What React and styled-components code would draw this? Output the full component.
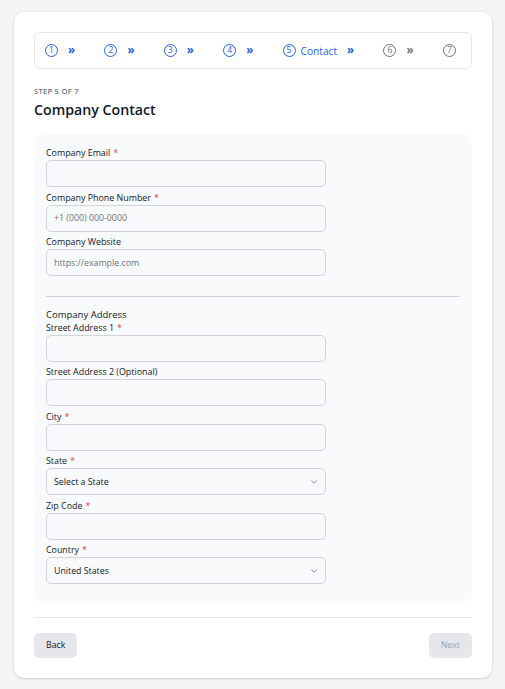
import React from "react";
import styled, { createGlobalStyle } from "styled-components";
import { ChevronDown } from "lucide-react";

const Global = createGlobalStyle`
  * { box-sizing: border-box; }
  html, body { margin: 0; padding: 0; background: #f3f4f6; }
  body { font-family: "Open Sans", "Noto Sans", "Liberation Sans", sans-serif; color: #111827; }
`;

const Page = styled.div`
  padding: 12px 13px 12px 14px;
`;

const Card = styled.div`
  background: #ffffff;
  border-radius: 10px;
  box-shadow: 0 1px 3px rgba(0, 0, 0, 0.12), 0 0 0 1px rgba(0, 0, 0, 0.02);
  padding: 20px 20px 20px;
`;

const Stepper = styled.div`
  display: flex;
  align-items: center;
  height: 37px;
  border: 1px solid #e5e7eb;
  border-radius: 6px;
  padding: 0 10px;
  gap: 29.3px;
`;

const Step = styled.div`
  display: flex;
  align-items: center;
  color: ${(p) => (p.$done ? "#2563eb" : "#6b7280")};
`;

const Num = styled.span`
  width: 13px;
  height: 13px;
  border-radius: 50%;
  border: 1px solid currentColor;
  display: inline-flex;
  align-items: center;
  justify-content: center;
  font-size: 8.5px;
  line-height: 1;
  font-weight: 400;
`;

const StepName = styled.span`
  font-size: 10.2px;
  font-weight: 500;
  margin-left: 5px;
`;

const Arrow = styled.span`
  font-size: 11.5px;
  font-weight: 700;
  line-height: 1;
  margin-left: 10px;
  margin-top: -2px;
  color: ${(p) => (p.$done ? "#2563eb" : "#6b7280")};
`;

const StepCount = styled.div`
  margin-top: 17px;
  font-size: 7.6px;
  font-weight: 600;
  letter-spacing: 0.25px;
  color: #6b7280;
  text-transform: uppercase;
  line-height: 10px;
`;

const Title = styled.h1`
  margin: 3px 0 0;
  font-size: 14.2px;
  line-height: 21px;
  font-weight: 600;
  color: #111827;
`;

const Panel = styled.div`
  margin-top: 14px;
  background: #f9fafb;
  border-radius: 10px;
  padding: 12px 12px 15px;
  display: flex;
  flex-direction: column;
`;

const Field = styled.div`
  display: flex;
  flex-direction: column;
  margin-bottom: 3.5px;
`;

const Label = styled.label`
  font-size: 8.9px;
  line-height: 13px;
  font-weight: 500;
  color: #111827;
  margin-bottom: 1px;
`;

const Req = styled.span`
  color: #ef4444;
  margin-left: 3px;
`;

const Input = styled.input`
  width: 280px;
  height: 27px;
  border: 1px solid #d1d5db;
  border-radius: 5px;
  background: #f9fafb;
  padding: 0 7px;
  font-family: inherit;
  font-size: 8.8px;
  color: #111827;
  outline: none;
  &::placeholder { color: #6b7280; }
`;

const Select = styled.div`
  width: 280px;
  height: 27px;
  border: 1px solid #d1d5db;
  border-radius: 5px;
  background: #f9fafb;
  padding: 0 6px 0 7px;
  display: flex;
  align-items: center;
  justify-content: space-between;
  font-size: 8.8px;
  color: #111827;
`;

const Divider = styled.hr`
  border: 0;
  border-top: 1px solid #d1d5db;
  margin: 16.5px 0 10.5px;
  width: 100%;
`;

const SectionTitle = styled.div`
  font-size: 9.5px;
  line-height: 13px;
  font-weight: 400;
  color: #111827;
`;

const FooterRule = styled.hr`
  border: 0;
  border-top: 1px solid #e5e7eb;
  margin: 14px 0 15px;
`;

const Footer = styled.div`
  display: flex;
  justify-content: space-between;
  align-items: center;
`;

const Button = styled.button`
  height: 25px;
  padding: 0 12px;
  border: 0;
  border-radius: 5px;
  background: #e5e7eb;
  font-family: inherit;
  font-size: 8.8px;
  font-weight: 500;
  color: ${(p) => (p.$disabled ? "#9ca3af" : "#111827")};
  min-width: 43px;
`;

const steps = [
  { n: 1, done: true, arrow: true },
  { n: 2, done: true, arrow: true },
  { n: 3, done: true, arrow: true },
  { n: 4, done: true, arrow: true },
  { n: 5, done: true, arrow: true, name: "Contact" },
  { n: 6, done: false, arrow: true },
  { n: 7, done: false, arrow: false },
];

function TextField({ label, required, placeholder }) {
  return (
    <Field>
      <Label>
        {label}
        {required && <Req>*</Req>}
      </Label>
      <Input placeholder={placeholder} />
    </Field>
  );
}

function SelectField({ label, value }) {
  return (
    <Field>
      <Label>
        {label}
        <Req>*</Req>
      </Label>
      <Select>
        <span>{value}</span>
        <ChevronDown size={10} color="#6b7280" strokeWidth={2} />
      </Select>
    </Field>
  );
}

export default function App() {
  return (
    <>
      <Global />
      <Page>
        <Card>
          <Stepper>
            {steps.map((s) => (
              <Step key={s.n} $done={s.done}>
                <Num>{s.n}</Num>
                {s.name && <StepName>{s.name}</StepName>}
                {s.arrow && <Arrow $done={s.done}>»</Arrow>}
              </Step>
            ))}
          </Stepper>
          <StepCount>Step 5 of 7</StepCount>
          <Title>Company Contact</Title>
          <Panel>
            <TextField label="Company Email" required />
            <TextField label="Company Phone Number" required placeholder="+1 (000) 000-0000" />
            <TextField label="Company Website" placeholder="https://example.com" />
            <Divider />
            <SectionTitle>Company Address</SectionTitle>
            <TextField label="Street Address 1" required />
            <TextField label="Street Address 2 (Optional)" />
            <TextField label="City" required />
            <SelectField label="State" value="Select a State" />
            <TextField label="Zip Code" required />
            <SelectField label="Country" value="United States" />
          </Panel>
          <FooterRule />
          <Footer>
            <Button>Back</Button>
            <Button $disabled>Next</Button>
          </Footer>
        </Card>
      </Page>
    </>
  );
}
